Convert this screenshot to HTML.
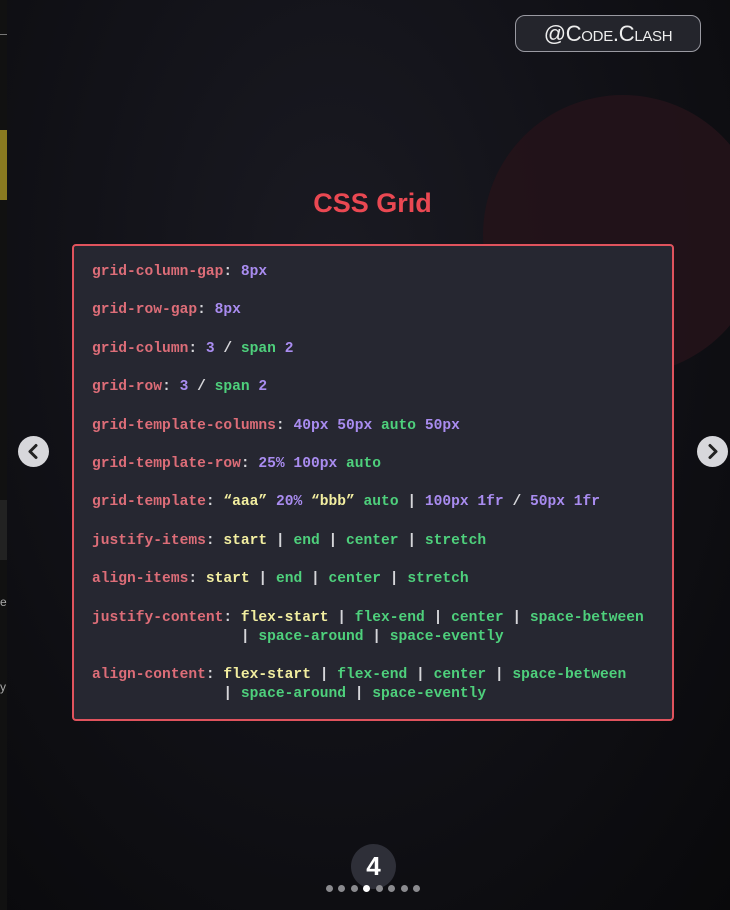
<!DOCTYPE html>
<html><head><meta charset="utf-8"><style>
*{margin:0;padding:0;box-sizing:border-box}
html,body{width:730px;height:910px;overflow:hidden;background:#0a0a0d}
.strip{position:absolute;left:0;top:0;width:7px;height:910px;background:#111}
.main{position:absolute;left:7px;top:0;width:723px;height:910px;background:radial-gradient(ellipse at 45% 30%,#1a1a22 0%,#121218 45%,#09090b 100%)}
.blob{position:absolute;left:483px;top:95px;width:280px;height:280px;border-radius:50%;background:#241319;opacity:.9}
.badge{position:absolute;left:515px;top:15px;width:186px;height:37px;border:1.5px solid #9a9aa2;border-radius:10px;background:#24252c;color:#eee;font:22px "Liberation Sans",sans-serif;text-align:center;line-height:36px;font-variant:small-caps;letter-spacing:-.3px}
h1{position:absolute;left:0;width:745px;top:188px;text-align:center;color:#ea4852;font:bold 27px "Liberation Sans",sans-serif}
.box{position:absolute;left:72px;top:244px;width:602px;height:477px;border:2px solid #e0535d;border-radius:4px;background:#262731}
pre{position:absolute;left:18px;top:17px;font:bold 14.6px/19.2px "Liberation Mono",monospace;color:#d6d6da}
.p{color:#dd6d78}.n{color:#a98cf0}.g{color:#4ed07c}.y{color:#f2eea0}
.arr{position:absolute;top:436px;width:31px;height:31px;border-radius:50%;background:#d7d7db}
.num{position:absolute;left:351px;top:844px;width:45px;height:45px;border-radius:50%;background:#2e2f38;color:#fff;font:bold 26px "Liberation Sans",sans-serif;text-align:center;line-height:45px}
.dot{position:absolute;top:885px;width:7px;height:7px;border-radius:50%;background:#8a8a8e}
</style></head><body>
<div class="strip"><div style="position:absolute;top:130px;width:7px;height:70px;background:#8a7a20"></div><div style="position:absolute;top:34px;width:7px;height:1px;background:#777"></div><div style="position:absolute;top:500px;width:7px;height:60px;background:#222"></div><div style="position:absolute;top:595px;left:0;color:#aaa;font:12px sans-serif">e</div><div style="position:absolute;top:680px;left:0;color:#aaa;font:12px sans-serif">y</div></div>
<div class="main"></div>
<div class="blob"></div>
<div class="badge">@Code.Clash</div>
<h1>CSS Grid</h1>
<div class="box"><pre><span class="p">grid-column-gap</span>: <span class="n">8px</span>
 
<span class="p">grid-row-gap</span>: <span class="n">8px</span>
 
<span class="p">grid-column</span>: <span class="n">3</span> / <span class="g">span</span> <span class="n">2</span>

<span class="p">grid-row</span>: <span class="n">3</span> / <span class="g">span</span> <span class="n">2</span>

<span class="p">grid-template-columns</span>: <span class="n">40px 50px</span> <span class="g">auto</span> <span class="n">50px</span>

<span class="p">grid-template-row</span>: <span class="n">25% 100px</span> <span class="g">auto</span>

<span class="p">grid-template</span>: <span class="y">“aaa”</span> <span class="n">20%</span> <span class="y">“bbb”</span> <span class="g">auto</span> | <span class="n">100px 1fr</span> / <span class="n">50px 1fr</span>

<span class="p">justify-items</span>: <span class="y">start</span> | <span class="g">end</span> | <span class="g">center</span> | <span class="g">stretch</span>

<span class="p">align-items</span>: <span class="y">start</span> | <span class="g">end</span> | <span class="g">center</span> | <span class="g">stretch</span>

<span class="p">justify-content</span>: <span class="y">flex-start</span> | <span class="g">flex-end</span> | <span class="g">center</span> | <span class="g">space-between</span>
                 | <span class="g">space-around</span> | <span class="g">space-evently</span>

<span class="p">align-content</span>: <span class="y">flex-start</span> | <span class="g">flex-end</span> | <span class="g">center</span> | <span class="g">space-between</span>
               | <span class="g">space-around</span> | <span class="g">space-evently</span></pre></div>
<div class="arr" style="left:18px"><svg width="31" height="31" viewBox="0 0 31 31"><path d="M18 9.5 L12 15.5 L18 21.5" fill="none" stroke="#222" stroke-width="3" stroke-linecap="round" stroke-linejoin="round"/></svg></div>
<div class="arr" style="left:697px"><svg width="31" height="31" viewBox="0 0 31 31"><path d="M13 9.5 L19 15.5 L13 21.5" fill="none" stroke="#222" stroke-width="3" stroke-linecap="round" stroke-linejoin="round"/></svg></div>
<div class="num">4</div>
<div class="dot" style="left:326px"></div><div class="dot" style="left:338px"></div><div class="dot" style="left:351px"></div><div class="dot" style="left:363px;background:#fff"></div><div class="dot" style="left:376px"></div><div class="dot" style="left:388px"></div><div class="dot" style="left:401px"></div><div class="dot" style="left:413px"></div>
</body></html>
